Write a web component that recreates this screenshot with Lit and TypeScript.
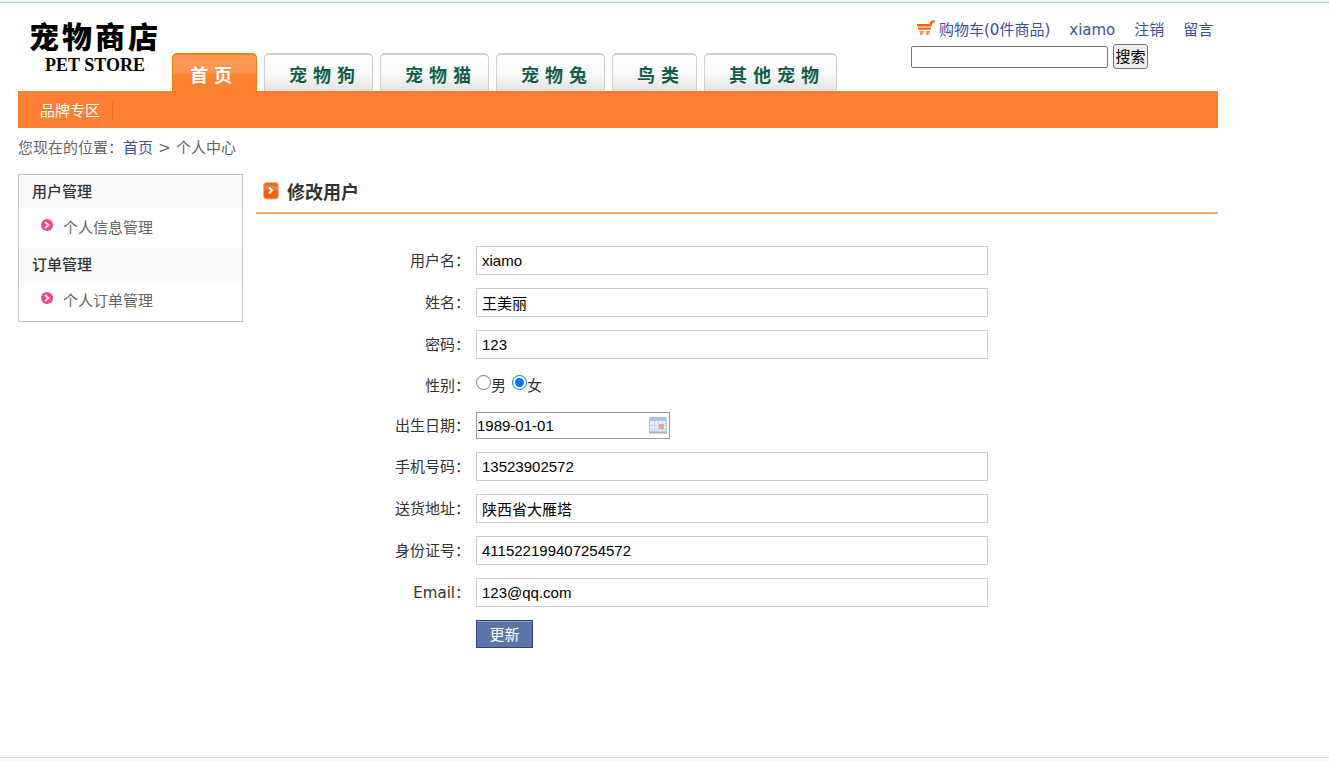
import { LitElement, html, css } from "lit";
import { customElement, state } from "lit/decorators.js";

interface TextField {
  id: string;
  label: string;
  value: string;
}

const tabs = ["宠物狗", "宠物猫", "宠物兔", "鸟类", "其他宠物"];

const sections = [
  { title: "用户管理", link: "个人信息管理" },
  { title: "订单管理", link: "个人订单管理" },
];

const accountFields: TextField[] = [
  { id: "username", label: "用户名", value: "xiamo" },
  { id: "realname", label: "姓名", value: "王美丽" },
  { id: "password", label: "密码", value: "123" },
];

const contactFields: TextField[] = [
  { id: "phone", label: "手机号码", value: "13523902572" },
  { id: "address", label: "送货地址", value: "陕西省大雁塔" },
  { id: "idcard", label: "身份证号", value: "411522199407254572" },
  { id: "email", label: "Email", value: "123@qq.com" },
];

const cartIcon = html`<svg class="cart-icon" width="18" height="18" viewBox="0 0 18 18" aria-hidden="true">
  <path d="M0 4h12.400C13 1.500 14 .2 17.800.2v2c-1.800 0-2.400.5-2.900 2L14.400 6.500H0z" fill="#ff6200" />
  <path d="M.8 7.500h13.400l-.8 2.300H1.600z" fill="#ff6200" />
  <path d="M2 11h5.200l-1.200 2H3.200zM8.200 11h5l-1 2H9.400z" fill="#ff9a55" />
  <path d="M3.200 13h2.400v2H3.200zM9.400 13h2.400v2H9.400z" fill="#ff7a22" />
</svg>`;

const titleIcon = html`<svg width="16" height="18" viewBox="0 0 16 18" aria-hidden="true">
  <defs>
    <linearGradient id="tile" x1="0" y1="0" x2="0" y2="1">
      <stop offset="0" stop-color="#d9622f" />
      <stop offset=".35" stop-color="#f08a4a" />
      <stop offset=".55" stop-color="#e9601b" />
      <stop offset="1" stop-color="#f4640f" />
    </linearGradient>
  </defs>
  <rect x=".5" y=".5" width="15" height="16.500" rx="3" fill="url(#tile)" stroke="#f3b08c" />
  <path d="M6 5.500l3 3-3 3" fill="none" stroke="#fff" stroke-width="1.800" />
</svg>`;

const bulletIcon = html`<svg width="12" height="12" viewBox="0 0 12 12" aria-hidden="true">
  <circle cx="6" cy="6" r="6" fill="#ff3d8b" />
  <path d="M4 3l3.400 3L4 9" fill="none" stroke="#fff" stroke-width="2" />
</svg>`;

const calendarIcon = html`<svg width="18" height="17" viewBox="0 0 18 17" aria-hidden="true">
  <rect x=".5" y=".5" width="17" height="15" rx="1" fill="#e6eefa" stroke="#b3c0d6" />
  <rect x="1" y="1" width="16" height="3" fill="#a9c4ee" />
  <path d="M1 8.500h16M1 12.500h16M5.500 4v11M9.500 4v11M13.500 4v11" stroke="#cbd8ee" />
  <rect x="10" y="7" width="5" height="5" fill="#f3a38f" />
  <path d="M0 15.500h18" stroke="#a9b3c4" stroke-width="2" />
</svg>`;

@customElement("app-root")
export class AppRoot extends LitElement {
  @state() private gender = "female";

  static styles = css`
    :host {
      display: flex;
      flex-direction: column;
      min-height: 100vh;
      box-sizing: border-box;
      border-top: 2px solid #f4fbfb;
      background: #fff;
      color: #333;
      font: 15px/20px "DejaVu Sans", "Noto Sans CJK SC", sans-serif;
    }
    a { text-decoration: none; color: #3a4fa3; }
    h2, h3 { margin: 0; }
    svg { display: block; flex: none; }
    .rule { height: 1px; background: #b1d4d6; }
    .page { flex: 1; max-width: 1200px; width: calc(100% - 36px); margin-left: 18px; }
    .head { display: flex; height: 88px; }
    .logo { display: flex; flex-direction: column; align-items: center; width: 154px; padding-top: 17px; box-sizing: border-box; color: #000; }
    .logo-cn { font: 900 30px/36px "Liberation Sans", "Noto Sans CJK SC", sans-serif; letter-spacing: 3px; }
    .logo-en { font: bold 18px/18px "Liberation Serif", serif; }
    .tabs { display: flex; align-items: flex-end; gap: 7px; }
    .tab {
      display: block;
      box-sizing: border-box;
      height: 38px;
      padding: 0 11px 0 24px;
      border: solid #d0d0d0;
      border-width: 2px 1px 0;
      border-radius: 5px 5px 0 0;
      background: linear-gradient(#fff, #fafafa 50%, #e2e2e2);
      color: #0f5f4c;
      font: bold 18px/38px "Noto Sans CJK SC", sans-serif;
      letter-spacing: 6px;
    }
    .tab.on {
      padding: 0 18px 0 17px;
      border-color: #f07d10;
      background: linear-gradient(#ff9a55, #ff9550 50%, #ff8530 52%, #ff7f2e);
      color: #fff;
    }
    .tools { margin-left: auto; width: 307px; padding-top: 17px; }
    .links { display: flex; gap: 19px; padding-left: 6px; white-space: nowrap; }
    .cart { display: flex; gap: 4px; }
    .search { display: flex; align-items: center; gap: 5px; margin-top: 4px; }
    .search input { box-sizing: border-box; width: 197px; height: 22px; border: 1px solid #767676; border-radius: 2px; padding: 1px 2px; }
    .search button { box-sizing: border-box; width: 35px; height: 25px; padding: 0; border: 1px solid #767676; border-radius: 3px; background: #efefef; color: #000; font: inherit; }
    .bar { display: flex; align-items: center; box-sizing: border-box; height: 37px; padding-top: 2px; background: #ff7f32; }
    .bar a { padding: 0 12px 0 22px; border-right: 1px solid #e57300; color: #fff; line-height: 18px; }
    .crumbs { display: flex; padding: 10px 0 16px; color: #666; }
    .crumbs .sep { width: 23px; text-align: center; }
    .columns { display: flex; align-items: flex-start; gap: 13px; }
    .side { box-sizing: border-box; width: 225px; flex: none; border: 1px solid #c2c2c2; }
    .side h3 { height: 33px; padding-left: 13px; background: #fafafa; font-size: 15px; line-height: 35px; font-weight: 500; }
    .item { display: flex; align-items: center; gap: 10px; height: 40px; padding-left: 22px; }
    .item svg { margin-bottom: 6px; }
    .item a { color: #666; }
    .main { flex: 1; min-width: 0; }
    .title { display: flex; align-items: center; gap: 8px; box-sizing: border-box; height: 40px; padding-left: 7px; border-bottom: 2px solid #faa85c; }
    .title svg { margin-bottom: 4px; }
    .title h2 { font-size: 18px; line-height: 24px; font-weight: bold; }
    .form { display: flex; flex-direction: column; gap: 13px; padding-top: 32px; }
    .row { display: grid; grid-template-columns: 214px minmax(0, 512px); gap: 6px; align-items: center; }
    .label { text-align: right; }
    .text { box-sizing: border-box; width: 100%; height: 29px; border: 1px solid #ccc; padding: 0 5px; background: #fff; color: #000; font: 15px/20px "Liberation Sans", "Noto Sans CJK SC", sans-serif; }
    .choices { display: flex; gap: 6px; box-sizing: border-box; height: 27px; padding-top: 3px; align-items: flex-start; }
    .choices label { display: flex; align-items: flex-start; line-height: 22px; }
    .choices input { width: 15px; height: 15px; margin: 0; accent-color: #0075ff; }
    .date { display: flex; align-items: center; box-sizing: border-box; width: 194px; height: 27px; border: 1px solid #999; padding-right: 2px; }
    .date input { flex: 1; min-width: 0; border: 0; padding: 0; color: #000; font: 15px/20px "Liberation Sans", sans-serif; }
    .submit { grid-column: 2; justify-self: start; width: 57px; height: 28px; padding: 2px 0 0; border: 1px solid #29447e; background: #5b75a9; box-shadow: inset 0 1px #8a9cc2; color: #fff; font: inherit; }
    .foot { height: 3px; border-top: 1px solid #ddd; background: #fafafa; }
  `;

  private renderField(f: TextField) {
    return html`<div class="row">
      <label class="label" for=${f.id}>${f.label}：</label>
      <input class="text" id=${f.id} type="text" .value=${f.value} />
    </div>`;
  }

  render() {
    return html`
      <div class="rule"></div>
      <div class="page">
        <header class="head">
          <div class="logo">
            <span class="logo-cn">宠物商店</span>
            <span class="logo-en">PET STORE</span>
          </div>
          <nav class="tabs">
            <a class="tab on" href="#">首页</a>
            ${tabs.map((t) => html`<a class="tab" href="#">${t}</a>`)}
          </nav>
          <div class="tools">
            <div class="links">
              <a class="cart" href="#">${cartIcon}<span>购物车(0件商品)</span></a>
              <a href="#">xiamo</a><a href="#">注销</a><a href="#">留言</a>
            </div>
            <form class="search" @submit=${(e: Event) => e.preventDefault()}>
              <input type="text" aria-label="搜索" />
              <button>搜索</button>
            </form>
          </div>
        </header>
        <nav class="bar"><a href="#">品牌专区</a></nav>
        <div class="crumbs">
          <span>您现在的位置：</span><a href="#">首页</a><span class="sep">&gt;</span><span>个人中心</span>
        </div>
        <div class="columns">
          <aside class="side">
            ${sections.map(
              (s) => html`<h3>${s.title}</h3>
                <div class="item">${bulletIcon}<a href="#">${s.link}</a></div>`
            )}
          </aside>
          <main class="main">
            <div class="title">${titleIcon}<h2>修改用户</h2></div>
            <form class="form" @submit=${(e: Event) => e.preventDefault()}>
              ${accountFields.map((f) => this.renderField(f))}
              <div class="row" role="radiogroup" aria-labelledby="gender">
                <span class="label" id="gender">性别：</span>
                <div class="choices">
                  <label><input type="radio" name="gender" .checked=${this.gender === "male"} @change=${() => (this.gender = "male")} />男</label>
                  <label><input type="radio" name="gender" .checked=${this.gender === "female"} @change=${() => (this.gender = "female")} />女</label>
                </div>
              </div>
              <div class="row">
                <label class="label" for="birthday">出生日期：</label>
                <div class="date"><input id="birthday" type="text" .value=${"1989-01-01"} />${calendarIcon}</div>
              </div>
              ${contactFields.map((f) => this.renderField(f))}
              <div class="row"><button class="submit">更新</button></div>
            </form>
          </main>
        </div>
      </div>
      <footer class="foot"></footer>
    `;
  }
}
